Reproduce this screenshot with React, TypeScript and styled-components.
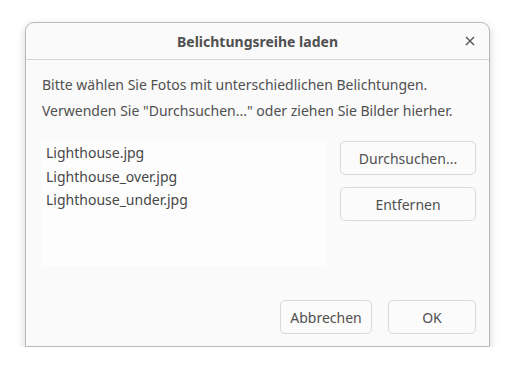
import React from "react"
import styled, { createGlobalStyle } from "styled-components"

const GlobalStyle = createGlobalStyle`
  html, body {
    margin: 0;
    padding: 0;
    background: #ffffff;
  }
  body {
    font-family: "Noto Sans", "DejaVu Sans", sans-serif;
    color: #4d4d4d;
  }
`

const Dialog = styled.div`
  margin: 22px 0 0 25px;
  width: 465px;
  height: 325px;
  box-sizing: border-box;
  border: 1px solid #b9b9b9;
  border-radius: 9px 9px 0 0;
  background: #fafafa;
  box-shadow: 0 3px 9px rgba(0, 0, 0, 0.18);
  display: flex;
  flex-direction: column;
`

const Header = styled.div`
  position: relative;
  height: 36px;
  border-bottom: 1px solid #d6d6d6;
  display: flex;
  align-items: center;
  justify-content: center;
`

const Title = styled.div`
  font-size: 14px;
  font-weight: 700;
  color: #505050;
`

const CloseButton = styled.button`
  position: absolute;
  right: 10px;
  top: 9px;
  width: 18px;
  height: 18px;
  padding: 0;
  border: none;
  background: transparent;
  display: flex;
  align-items: center;
  justify-content: center;
`

const Body = styled.div`
  flex: 1;
  display: flex;
  flex-direction: column;
  padding: 16px 13px 12px 16px;
`

const Info = styled.div`
  font-size: 14px;
  line-height: 18px;
  color: #505050;
  & + & {
    margin-top: 8px;
  }
`

const Main = styled.div`
  margin-top: 20px;
  display: flex;
  gap: 13px;
`

const FileList = styled.ul`
  list-style: none;
  margin: 0;
  padding: 1px 0 0 4px;
  width: 285px;
  height: 126px;
  box-sizing: border-box;
  background: #fdfdfd;
`

const FileRow = styled.li`
  font-size: 14px;
  height: 23.5px;
  line-height: 23.5px;
  color: #474747;
`

const Side = styled.div`
  display: flex;
  flex-direction: column;
  gap: 12px;
  padding-top: 1px;
`

const Button = styled.button<{ $width: number }>`
  width: ${(p) => p.$width}px;
  height: 34px;
  box-sizing: border-box;
  border: 1px solid #d8d8d8;
  border-radius: 5px;
  background: #fbfbfb;
  font-family: inherit;
  font-size: 14px;
  color: #505050;
  padding: 0;
`

const Footer = styled.div`
  margin-top: auto;
  display: flex;
  justify-content: flex-end;
  gap: 16px;
`

const files = ["Lighthouse.jpg", "Lighthouse_over.jpg", "Lighthouse_under.jpg"]

export default function App() {
  return (
    <>
      <GlobalStyle />
      <Dialog>
        <Header>
          <Title>Belichtungsreihe laden</Title>
          <CloseButton aria-label="Schließen">
            <svg width="10" height="10" viewBox="0 0 10 10">
              <path d="M1 1 L9 9 M9 1 L1 9" stroke="#555" strokeWidth="1.4" />
            </svg>
          </CloseButton>
        </Header>
        <Body>
          <Info>Bitte wählen Sie Fotos mit unterschiedlichen Belichtungen.</Info>
          <Info>Verwenden Sie "Durchsuchen..." oder ziehen Sie Bilder hierher.</Info>
          <Main>
            <FileList>
              {files.map((f) => (
                <FileRow key={f}>{f}</FileRow>
              ))}
            </FileList>
            <Side>
              <Button $width={136}>Durchsuchen...</Button>
              <Button $width={136}>Entfernen</Button>
            </Side>
          </Main>
          <Footer>
            <Button $width={92}>Abbrechen</Button>
            <Button $width={88}>OK</Button>
          </Footer>
        </Body>
      </Dialog>
    </>
  )
}
